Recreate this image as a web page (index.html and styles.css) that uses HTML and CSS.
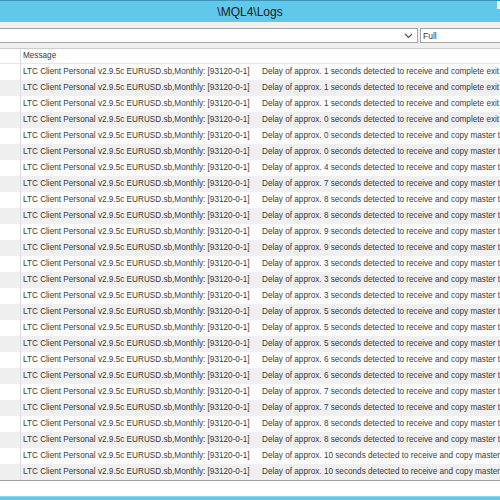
FILE: index.html
```html
<!DOCTYPE html>
<html>
<head>
<meta charset="utf-8">
<link rel="stylesheet" href="styles.css">
</head>
<body>
<div class="win">
  <div class="title"><span>\MQL4\Logs</span><i class="ctl"></i></div>
  <div class="toolbar">
    <div class="combo"><svg class="arrow" width="9" height="6" viewBox="0 0 9 6"><path d="M1 1 L4.5 4.5 L8 1" fill="none" stroke="#555" stroke-width="1.2"/></svg></div>
    <div class="full">Full</div>
  </div>
  <div class="grid">
    <div class="row head"><div class="c0"></div><div class="c1">Message</div></div>
    <div class="row"><div class="c0"></div><div class="c1"><span class="src">LTC Client Personal v2.9.5c EURUSD.sb,Monthly: [93120-0-1]</span><span class="msg">Delay of approx. 1 seconds detected to receive and complete exit trade</span></div></div>
    <div class="row"><div class="c0"></div><div class="c1"><span class="src">LTC Client Personal v2.9.5c EURUSD.sb,Monthly: [93120-0-1]</span><span class="msg">Delay of approx. 1 seconds detected to receive and complete exit trade</span></div></div>
    <div class="row"><div class="c0"></div><div class="c1"><span class="src">LTC Client Personal v2.9.5c EURUSD.sb,Monthly: [93120-0-1]</span><span class="msg">Delay of approx. 1 seconds detected to receive and complete exit trade</span></div></div>
    <div class="row"><div class="c0"></div><div class="c1"><span class="src">LTC Client Personal v2.9.5c EURUSD.sb,Monthly: [93120-0-1]</span><span class="msg">Delay of approx. 0 seconds detected to receive and complete exit trade</span></div></div>
    <div class="row"><div class="c0"></div><div class="c1"><span class="src">LTC Client Personal v2.9.5c EURUSD.sb,Monthly: [93120-0-1]</span><span class="msg">Delay of approx. 0 seconds detected to receive and copy master trade</span></div></div>
    <div class="row"><div class="c0"></div><div class="c1"><span class="src">LTC Client Personal v2.9.5c EURUSD.sb,Monthly: [93120-0-1]</span><span class="msg">Delay of approx. 0 seconds detected to receive and copy master trade</span></div></div>
    <div class="row"><div class="c0"></div><div class="c1"><span class="src">LTC Client Personal v2.9.5c EURUSD.sb,Monthly: [93120-0-1]</span><span class="msg">Delay of approx. 4 seconds detected to receive and copy master trade</span></div></div>
    <div class="row"><div class="c0"></div><div class="c1"><span class="src">LTC Client Personal v2.9.5c EURUSD.sb,Monthly: [93120-0-1]</span><span class="msg">Delay of approx. 7 seconds detected to receive and copy master trade</span></div></div>
    <div class="row"><div class="c0"></div><div class="c1"><span class="src">LTC Client Personal v2.9.5c EURUSD.sb,Monthly: [93120-0-1]</span><span class="msg">Delay of approx. 8 seconds detected to receive and copy master trade</span></div></div>
    <div class="row"><div class="c0"></div><div class="c1"><span class="src">LTC Client Personal v2.9.5c EURUSD.sb,Monthly: [93120-0-1]</span><span class="msg">Delay of approx. 8 seconds detected to receive and copy master trade</span></div></div>
    <div class="row"><div class="c0"></div><div class="c1"><span class="src">LTC Client Personal v2.9.5c EURUSD.sb,Monthly: [93120-0-1]</span><span class="msg">Delay of approx. 9 seconds detected to receive and copy master trade</span></div></div>
    <div class="row"><div class="c0"></div><div class="c1"><span class="src">LTC Client Personal v2.9.5c EURUSD.sb,Monthly: [93120-0-1]</span><span class="msg">Delay of approx. 9 seconds detected to receive and copy master trade</span></div></div>
    <div class="row"><div class="c0"></div><div class="c1"><span class="src">LTC Client Personal v2.9.5c EURUSD.sb,Monthly: [93120-0-1]</span><span class="msg">Delay of approx. 3 seconds detected to receive and copy master trade</span></div></div>
    <div class="row"><div class="c0"></div><div class="c1"><span class="src">LTC Client Personal v2.9.5c EURUSD.sb,Monthly: [93120-0-1]</span><span class="msg">Delay of approx. 3 seconds detected to receive and copy master trade</span></div></div>
    <div class="row"><div class="c0"></div><div class="c1"><span class="src">LTC Client Personal v2.9.5c EURUSD.sb,Monthly: [93120-0-1]</span><span class="msg">Delay of approx. 3 seconds detected to receive and copy master trade</span></div></div>
    <div class="row"><div class="c0"></div><div class="c1"><span class="src">LTC Client Personal v2.9.5c EURUSD.sb,Monthly: [93120-0-1]</span><span class="msg">Delay of approx. 5 seconds detected to receive and copy master trade</span></div></div>
    <div class="row"><div class="c0"></div><div class="c1"><span class="src">LTC Client Personal v2.9.5c EURUSD.sb,Monthly: [93120-0-1]</span><span class="msg">Delay of approx. 5 seconds detected to receive and copy master trade</span></div></div>
    <div class="row"><div class="c0"></div><div class="c1"><span class="src">LTC Client Personal v2.9.5c EURUSD.sb,Monthly: [93120-0-1]</span><span class="msg">Delay of approx. 5 seconds detected to receive and copy master trade</span></div></div>
    <div class="row"><div class="c0"></div><div class="c1"><span class="src">LTC Client Personal v2.9.5c EURUSD.sb,Monthly: [93120-0-1]</span><span class="msg">Delay of approx. 6 seconds detected to receive and copy master trade</span></div></div>
    <div class="row"><div class="c0"></div><div class="c1"><span class="src">LTC Client Personal v2.9.5c EURUSD.sb,Monthly: [93120-0-1]</span><span class="msg">Delay of approx. 6 seconds detected to receive and copy master trade</span></div></div>
    <div class="row"><div class="c0"></div><div class="c1"><span class="src">LTC Client Personal v2.9.5c EURUSD.sb,Monthly: [93120-0-1]</span><span class="msg">Delay of approx. 7 seconds detected to receive and copy master trade</span></div></div>
    <div class="row"><div class="c0"></div><div class="c1"><span class="src">LTC Client Personal v2.9.5c EURUSD.sb,Monthly: [93120-0-1]</span><span class="msg">Delay of approx. 7 seconds detected to receive and copy master trade</span></div></div>
    <div class="row"><div class="c0"></div><div class="c1"><span class="src">LTC Client Personal v2.9.5c EURUSD.sb,Monthly: [93120-0-1]</span><span class="msg">Delay of approx. 8 seconds detected to receive and copy master trade</span></div></div>
    <div class="row"><div class="c0"></div><div class="c1"><span class="src">LTC Client Personal v2.9.5c EURUSD.sb,Monthly: [93120-0-1]</span><span class="msg">Delay of approx. 8 seconds detected to receive and copy master trade</span></div></div>
    <div class="row"><div class="c0"></div><div class="c1"><span class="src">LTC Client Personal v2.9.5c EURUSD.sb,Monthly: [93120-0-1]</span><span class="msg">Delay of approx. 10 seconds detected to receive and copy master trade</span></div></div>
    <div class="row"><div class="c0"></div><div class="c1"><span class="src">LTC Client Personal v2.9.5c EURUSD.sb,Monthly: [93120-0-1]</span><span class="msg">Delay of approx. 10 seconds detected to receive and copy master trade</span></div></div>
  </div>
  <div class="status"></div>
  <div class="bottombar"></div>
</div>
</body>
</html>
```
FILE: styles.css
```css
html, body {
  margin: 0;
  padding: 0;
  background: #f0f0f0;
}
.win {
  width: 500px;
  height: 500px;
  overflow: hidden;
  display: flex;
  flex-direction: column;
  font-family: "Liberation Sans", Arial, sans-serif;
  color: #3a3a3a;
}
.title {
  height: 21px;
  border-top: 1px solid #3f93b5;
  background: #60c8ea;
  display: flex;
  align-items: center;
  justify-content: center;
  font-size: 12px;
  color: #1a1a1a;
  position: relative;
  flex: none;
}
.ctl {
  position: absolute;
  right: 0;
  top: 0;
  width: 3px;
  height: 8px;
  background: #e8f4fa;
}
.toolbar {
  flex: none;
  height: 27px;
  box-sizing: border-box;
  padding: 6px 0 5px 0;
  display: flex;
  gap: 2px;
  background: #f0f0f0;
  border-bottom: 1px solid #cdcdcd;
}
.combo {
  width: 420px;
  margin-left: -2px;
  box-sizing: border-box;
  background: #fff;
  border: 1px solid #a8a8a8;
  display: flex;
  align-items: center;
  justify-content: flex-end;
  padding-right: 4px;
}
.full {
  flex: 1;
  background: #fff;
  border: 1px solid #a8a8a8;
  border-right: none;
  font-size: 8.5px;
  line-height: 14px;
  padding-left: 2px;
  color: #333;
}
.grid {
  flex: none;
  background: #fff;
  border-bottom: 1px solid #a0a0a0;
}
.row {
  height: 16px;
  display: flex;
  font-size: 8.2px;
  line-height: 16px;
  white-space: nowrap;
}
.row:nth-child(odd) {
  background: #f0f0f0;
}
.row.head {
  height: 14px;
  line-height: 14px;
  background: #fff;
  border-bottom: 1px solid #e6e6e6;
}
.c0 {
  width: 20px;
  flex: none;
  border-right: 1px solid #dcdcdc;
}
.c1 {
  flex: 1;
  padding-left: 2px;
  overflow: hidden;
  display: flex;
}
.src {
  width: 239px;
  flex: none;
}
.msg {
  flex: none;
}
.status {
  flex: 1;
  background: #fff;
}
.bottombar {
  flex: none;
  height: 3px;
  border-top: 1px solid #8fd7ef;
  background: #60c8ea;
}
```
